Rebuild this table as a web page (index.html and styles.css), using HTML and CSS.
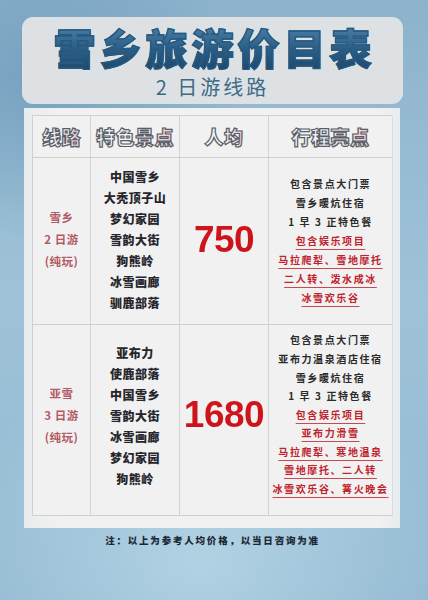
FILE: index.html
```html
<!DOCTYPE html>
<html lang="zh">
<head>
<meta charset="utf-8">
<link rel="stylesheet" href="styles.css">
</head>
<body>
<div class="page">
  <div class="title-card">
    <h1 class="title">雪乡旅游价目表</h1>
    <div class="subtitle">2 日游线路</div>
  </div>
  <div class="table-card">
    <div class="grid">
      <div class="cell head"><span class="htext">线路</span></div>
      <div class="cell head"><span class="htext">特色景点</span></div>
      <div class="cell head"><span class="htext">人均</span></div>
      <div class="cell head last"><span class="htext">行程亮点</span></div>

      <div class="cell route">雪乡<br>2 日游<br>(纯玩)</div>
      <div class="cell spots">中国雪乡<br>大秃顶子山<br>梦幻家园<br>雪韵大街<br>狗熊岭<br>冰雪画廊<br>驯鹿部落</div>
      <div class="cell price">750</div>
      <div class="cell points last">
        <div>包含景点大门票</div>
        <div>雪乡暖炕住宿</div>
        <div>1 早 3 正特色餐</div>
        <div class="red">包含娱乐项目</div>
        <div class="red">马拉爬犁、雪地摩托</div>
        <div class="red">二人转、泼水成冰</div>
        <div class="red">冰雪欢乐谷</div>
      </div>

      <div class="cell route bottom">亚雪<br>3 日游<br>(纯玩)</div>
      <div class="cell spots bottom">亚布力<br>使鹿部落<br>中国雪乡<br>雪韵大街<br>冰雪画廊<br>梦幻家园<br>狗熊岭</div>
      <div class="cell price bottom">1680</div>
      <div class="cell points last bottom">
        <div>包含景点大门票</div>
        <div>亚布力温泉酒店住宿</div>
        <div>雪乡暖炕住宿</div>
        <div>1 早 3 正特色餐</div>
        <div class="red">包含娱乐项目</div>
        <div class="red">亚布力滑雪</div>
        <div class="red">马拉爬犁、寒地温泉</div>
        <div class="red">雪地摩托、二人转</div>
        <div class="red">冰雪欢乐谷、篝火晚会</div>
      </div>
    </div>
  </div>
  <p class="note">注：以上为参考人均价格，以当日咨询为准</p>
</div>
</body>
</html>
```
FILE: styles.css
```css
html, body {
  margin: 0;
  padding: 0;
}
body {
  width: 428px;
  height: 600px;
  overflow: hidden;
  font-family: "Noto Sans CJK SC", "Noto Sans", sans-serif;
  background:
    radial-gradient(ellipse 260px 200px at 200px 560px, rgba(190,220,235,0.7), rgba(190,220,235,0) 100%),
    radial-gradient(ellipse 200px 160px at 40px 80px, rgba(90,140,175,0.5), rgba(90,140,175,0) 100%),
    linear-gradient(180deg, #8db3cc 0%, #9fc2d8 50%, #93b9d1 100%);
}
.page {
  padding: 17px 0 0 22px;
}
.title-card {
  width: 381px;
  height: 87px;
  box-sizing: border-box;
  background: #dde1e4;
  border-radius: 11px;
  display: flex;
  flex-direction: column;
  align-items: center;
  padding-top: 8px;
}
.title {
  margin: 0;
  font-size: 42px;
  line-height: 44px;
  font-weight: 900;
  letter-spacing: 4px;
  padding-left: 4px;
  background: linear-gradient(180deg, #4a80a8 0%, #2a5d86 55%, #1d4a70 100%);
  -webkit-background-clip: text;
  background-clip: text;
  color: transparent;
  -webkit-text-stroke: 1.3px #28597f;
}
.subtitle {
  font-size: 20px;
  line-height: 22px;
  color: #3b6b87;
  letter-spacing: 3px;
  margin-top: 7px;
}
.table-card {
  margin: 4px 0 0 2px;
  width: 376px;
  height: 420px;
  box-sizing: border-box;
  background: linear-gradient(90deg, #e9eced 0%, #f1f1f1 10%, #f1f1f1 94%, #e6ecef 100%);
  padding: 7px 8px 0 8px;
}
.grid {
  display: grid;
  grid-template-columns: 58px 89px 89px 124px;
  grid-template-rows: 42px 167px 191px;
  border-top: 1px solid #d0d0d0;
  border-left: 1px solid #d0d0d0;
  background: #f1f1f1;
}
.cell {
  border-right: 1.5px solid #d2d2d2;
  border-bottom: 1.5px solid #cfcfcf;
  display: flex;
  flex-direction: column;
  align-items: center;
  justify-content: center;
  text-align: center;
}
.cell.last {
  border-right: 1px solid #dcdcdc;
}
.head {
  font-size: 19px;
  font-weight: 900;
}
.htext {
  background: linear-gradient(90deg, #f4f4f4 0%, #f6f0f0 45%, #f2c9c9 100%);
  -webkit-background-clip: text;
  background-clip: text;
  color: transparent;
  -webkit-text-stroke: 1.2px #56606a;
  letter-spacing: 0.5px;
}
.route {
  font-size: 11.5px;
  font-weight: 700;
  color: #b35a66;
  line-height: 22px;
  letter-spacing: 0.5px;
  padding-bottom: 4px;
}
.spots {
  font-size: 12px;
  font-weight: 900;
  color: #26262c;
  line-height: 21px;
  letter-spacing: 0.5px;
  padding-bottom: 3px;
}
.spots.bottom {
  padding-bottom: 10px;
}
.route.bottom {
  padding-bottom: 10px;
}
.price {
  font-family: "Liberation Sans", Arial, sans-serif;
  font-size: 37px;
  font-weight: 700;
  letter-spacing: -0.5px;
  background: linear-gradient(180deg, #e41a20 0%, #c8121a 60%, #9c0e14 100%);
  -webkit-background-clip: text;
  background-clip: text;
  color: transparent;
  padding-bottom: 3px;
}
.price.bottom {
  padding-bottom: 10px;
}
.points {
  font-size: 10px;
  font-weight: 700;
  color: #2a2a2a;
  line-height: 19px;
  letter-spacing: 1.6px;
  padding-bottom: 2px;
}
.points.bottom {
  line-height: 18.6px;
  padding-bottom: 10px;
}
.points .red {
  color: #c0222c;
  text-decoration: underline;
  text-decoration-color: #c84a50;
  text-decoration-thickness: 1px;
  text-underline-offset: 4px;
}
.note {
  margin: 5px 0 0 0;
  width: 381px;
  text-align: center;
  font-size: 9.5px;
  font-weight: 900;
  color: #1c2834;
  letter-spacing: 1.8px;
}
```
